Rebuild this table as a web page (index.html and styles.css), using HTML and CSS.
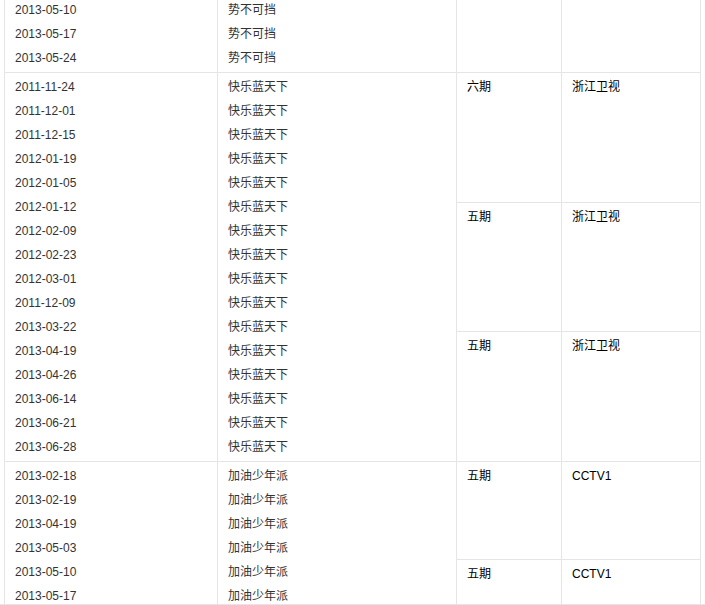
FILE: index.html
```html
<!DOCTYPE html>
<html lang="zh-CN">
<head>
<meta charset="utf-8">
<title>节目列表</title>
<link rel="stylesheet" href="styles.css">
</head>
<body>
<div class="frame">
  <div class="table">
    <div class="group r1">
      <div class="cell list">
        <div>2013-05-10</div>
        <div>2013-05-17</div>
        <div>2013-05-24</div>
      </div>
      <div class="cell list">
        <div>势不可挡</div>
        <div>势不可挡</div>
        <div>势不可挡</div>
      </div>
      <div class="cell sub"></div>
      <div class="cell sub"></div>
    </div>
    <div class="group r3">
      <div class="cell list">
        <div>2011-11-24</div>
        <div>2011-12-01</div>
        <div>2011-12-15</div>
        <div>2012-01-19</div>
        <div>2012-01-05</div>
        <div>2012-01-12</div>
        <div>2012-02-09</div>
        <div>2012-02-23</div>
        <div>2012-03-01</div>
        <div>2011-12-09</div>
        <div>2013-03-22</div>
        <div>2013-04-19</div>
        <div>2013-04-26</div>
        <div>2013-06-14</div>
        <div>2013-06-21</div>
        <div>2013-06-28</div>
      </div>
      <div class="cell list">
        <div>快乐蓝天下</div>
        <div>快乐蓝天下</div>
        <div>快乐蓝天下</div>
        <div>快乐蓝天下</div>
        <div>快乐蓝天下</div>
        <div>快乐蓝天下</div>
        <div>快乐蓝天下</div>
        <div>快乐蓝天下</div>
        <div>快乐蓝天下</div>
        <div>快乐蓝天下</div>
        <div>快乐蓝天下</div>
        <div>快乐蓝天下</div>
        <div>快乐蓝天下</div>
        <div>快乐蓝天下</div>
        <div>快乐蓝天下</div>
        <div>快乐蓝天下</div>
      </div>
      <div class="cell sub">六期</div>
      <div class="cell sub">浙江卫视</div>
      <div class="cell sub">五期</div>
      <div class="cell sub">浙江卫视</div>
      <div class="cell sub">五期</div>
      <div class="cell sub">浙江卫视</div>
    </div>
    <div class="group r3">
      <div class="cell list">
        <div>2013-02-18</div>
        <div>2013-02-19</div>
        <div>2013-04-19</div>
        <div>2013-05-03</div>
        <div>2013-05-10</div>
        <div>2013-05-17</div>
        <div>2013-05-24</div>
        <div>2013-05-31</div>
        <div>2013-06-07</div>
        <div>2013-06-14</div>
        <div>2013-06-21</div>
        <div>2013-06-28</div>
      </div>
      <div class="cell list">
        <div>加油少年派</div>
        <div>加油少年派</div>
        <div>加油少年派</div>
        <div>加油少年派</div>
        <div>加油少年派</div>
        <div>加油少年派</div>
        <div>加油少年派</div>
        <div>加油少年派</div>
        <div>加油少年派</div>
        <div>加油少年派</div>
        <div>加油少年派</div>
        <div>加油少年派</div>
      </div>
      <div class="cell sub">五期</div>
      <div class="cell sub">CCTV1</div>
      <div class="cell sub">五期</div>
      <div class="cell sub">CCTV1</div>
      <div class="cell sub">五期</div>
      <div class="cell sub">CCTV1</div>
    </div>
  </div>
</div>
</body>
</html>
```

FILE: styles.css
```css
html, body {
  margin: 0;
  padding: 0;
  background: #fff;
}

body {
  font-family: "Liberation Sans", "Noto Sans CJK SC", sans-serif;
  font-size: 12px;
  color: #333;
}

.frame {
  height: 604px;
  overflow: hidden;
  border-bottom: 1px solid #e5e5e5;
}

.table {
  margin: -5px 0 0 4px;
  width: 695px;
  padding: 1px;
  background: #e5e5e5;
  display: flex;
  flex-direction: column;
  gap: 1px;
}

.group {
  display: grid;
  grid-template-columns: 212px 238px 104px 138px;
  gap: 1px;
}

.group.r1 {
  grid-template-rows: 1fr;
}

.group.r3 {
  grid-template-rows: repeat(3, 1fr);
}

.cell {
  background: #fff;
  padding: 2px 10px;
  line-height: 24px;
  min-width: 0;
}

.list {
  grid-row: 1 / -1;
}

.sub {
  color: #000;
}
```
